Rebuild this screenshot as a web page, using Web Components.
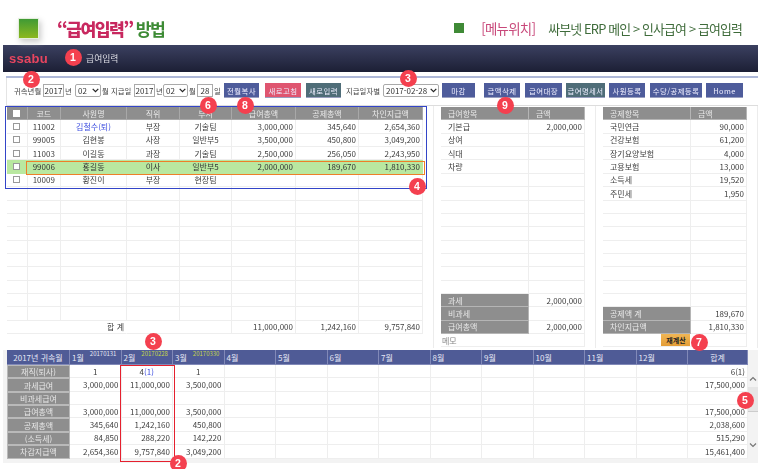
<!DOCTYPE html>
<html lang="ko">
<head>
<meta charset="utf-8">
<title>급여입력 방법</title>
<style>
    html, body { margin: 0; height: 469px; overflow: hidden; background: #fff; }
    body { font-family: "Noto Sans CJK KR", "Noto Sans", sans-serif; }
</style>
</head>
<body>
<guide-page></guide-page>
<script>
const FONT = `"Noto Sans CJK KR", "Noto Sans", sans-serif`;

class GuideHeader extends HTMLElement {
    constructor() {
        super();
        this.attachShadow({ mode: "open" });
        this.shadowRoot.innerHTML = `
            <style>
                :host { display: flex; align-items: center; height: 45px; box-sizing: border-box; padding: 11px 31px 0 18px; white-space: nowrap; font-family: ${FONT}; }
                .logo { width: 21px; height: 21px; background: linear-gradient(#3f9a35, #8cb81f); box-shadow: 2px 3px 6px #ccc; border: 1px solid #e4efdc; box-sizing: border-box; }
                h1 { margin: 0 0 0 18px; font-size: 17.2px; font-weight: 700; letter-spacing: -1.6px; color: #3d8b35; }
                h1 b { color: #c8285f; }
                .mark { width: 10px; height: 10px; background: #3f8a36; margin-left: auto; }
                .where { margin-left: 17px; font-size: 13.4px; letter-spacing: -0.7px; color: #c8487a; }
                .path { margin-left: 13px; font-size: 12.9px; letter-spacing: -0.85px; color: #3e6b3a; }
            </style>
            <div class="logo"></div>
            <h1><b>“급여입력”</b> 방법</h1>
            <div class="mark"></div>
            <span class="where">[메뉴위치]</span>
            <span class="path">싸부넷 ERP 메인 &gt; 인사급여 &gt; 급여입력</span>
        `;
    }
}

class NavBar extends HTMLElement {
    constructor() {
        super();
        this.attachShadow({ mode: "open" });
        this.shadowRoot.innerHTML = `
            <style>
                :host { display: flex; align-items: center; height: 27px; margin: 0 15px 0 3px; background: linear-gradient(#3b4060, #1c1f35); font-family: ${FONT}; }
                .brand { margin-left: 6px; font: 700 13px "Liberation Sans", sans-serif; letter-spacing: 0.3px; color: #e8455f; }
                .title { margin-left: 38px; font-size: 8.8px; color: #dcdce4; }
            </style>
            <span class="brand">ssabu</span>
            <span class="title"><slot></slot></span>
        `;
    }
}

class ToolButton extends HTMLElement {
    constructor() {
        super();
        this.attachShadow({ mode: "open" });
        this.shadowRoot.innerHTML = `
            <style>
                :host { display: flex; flex: none; align-items: center; justify-content: center; height: 14px; box-sizing: border-box; background: var(--btn, #4e5c9b); box-shadow: 0 1px 0 #9aa0c0; color: #eef; font-size: 7.4px; letter-spacing: 0.4px; white-space: nowrap; }
            </style>
            <slot></slot>
        `;
    }
}

class PickBox extends HTMLElement {
    constructor() {
        super();
        this.attachShadow({ mode: "open" });
        this.shadowRoot.innerHTML = `
            <style>
                :host { display: block; position: relative; flex: none; height: 13px; }
                select { display: block; width: 100%; height: 13px; box-sizing: border-box; margin: 0; padding: 0 0 0 2px; border: 1px solid #aaa; border-radius: 2px; background: #fff; color: #333; font: 8px ${FONT}; appearance: none; }
                svg { position: absolute; right: 2px; top: 4px; }
            </style>
            <select><option>${this.getAttribute("value")}</option></select>
            <svg width="7" height="5" viewBox="0 0 7 5"><path d="M.7.8 3.5 3.6 6.3.8" fill="none" stroke="#222" stroke-width="1.2"/></svg>
        `;
    }
}

class PayToolbar extends HTMLElement {
    constructor() {
        super();
        this.attachShadow({ mode: "open" });
        this.shadowRoot.innerHTML = `
            <style>
                :host { display: flex; align-items: center; height: 28px; box-sizing: border-box; margin: 0 15px 0 6px; padding: 0 0 3px 7px; border-left: 1px solid #e4e4e4; border-bottom: 1px solid #ddd; font-family: ${FONT}; font-size: 7.4px; color: #444; white-space: nowrap; }
                input { flex: none; box-sizing: border-box; height: 13px; padding: 0; margin: 0; border: 1px solid #aaa; border-radius: 0; background: #fff; color: #333; font: 8px ${FONT}; text-align: center; }
                span { flex: none; }
            </style>
            <span style="width:26px">귀속년월</span>
            <input value="2017" style="width:21px;margin-left:3px">
            <span style="width:6px;margin-left:1px">년</span>
            <pick-box value="02" style="width:26px;margin-left:4px"></pick-box>
            <span style="width:5px;margin-left:1px">월</span>
            <span style="width:19px;margin-left:4px">지급일</span>
            <input value="2017" style="width:21px;margin-left:4px">
            <span style="width:6px;margin-left:1px">년</span>
            <pick-box value="02" style="width:25px;margin-left:1px"></pick-box>
            <span style="width:6px;margin-left:1px">월</span>
            <input value="28" style="width:16px;margin-left:2px">
            <span style="width:6px;margin-left:1px">일</span>
            <tool-button style="width:35px;margin-left:4px">전월복사</tool-button>
            <tool-button style="width:36px;margin-left:6px;--btn:#df5570">새로고침</tool-button>
            <tool-button style="width:35px;margin-left:5px;--btn:#4f6d78">새로입력</tool-button>
            <span style="width:33px;margin-left:5px">지급일자별</span>
            <pick-box value="2017-02-28" style="width:56px;margin-left:4px"></pick-box>
            <tool-button style="width:33px;margin-left:3px">마감</tool-button>
            <tool-button style="width:36px;margin-left:9px">급액삭제</tool-button>
            <tool-button style="width:37px;margin-left:5px">급여대장</tool-button>
            <tool-button style="width:39px;margin-left:4px;--btn:#4f6d78">급여명세서</tool-button>
            <tool-button style="width:36px;margin-left:4px">사원등록</tool-button>
            <tool-button style="width:52px;margin-left:5px">수당/공제등록</tool-button>
            <tool-button style="width:37px;margin-left:4px">Home</tool-button>
        `;
    }
}

/* generic grid: cols = css column list, rows = array of rows, each cell a string or {t, c, span} */
class PayGrid extends HTMLElement {
    constructor() {
        super();
        this.attachShadow({ mode: "open" });
    }

    set config(cfg) {
        const cells = cfg.rows.map((row) => row.map((cell) => {
            const c = typeof cell === "object" ? cell : { t: cell };
            const span = c.span ? `grid-column: span ${c.span};` : "";
            return `<div class="cell ${c.c || ""}" style="${span}">${c.t}</div>`;
        }).join("")).join("");

        this.shadowRoot.innerHTML = `
            <style>
                :host { display: block; font-family: ${FONT}; font-size: 8px; color: #404040; }
                .grid { display: grid; grid-template-columns: ${cfg.cols}; grid-template-rows: ${cfg.rowSizes || ""}; grid-auto-rows: 13.36px; }
                .cell { display: flex; align-items: center; box-sizing: border-box; min-width: 0; padding: 0 2px; background: #fff; border-right: 1px solid #eee; border-bottom: 1px solid #eee; white-space: nowrap; overflow: hidden; }
                .h { justify-content: center; background: #8e8e8e; color: #e8e8e8; border-color: #a8a8a8; }
                .hl { background: #8e8e8e; color: #e8e8e8; padding-left: 7px; border-color: #b5b5b5; }
                .m { background: #4f5b96; color: #e6e8f5; border-color: #8189b8; }
                .mc { justify-content: center; }
                .lab { justify-content: center; background: #8e8e8e; color: #e6e6e6; border: 1px solid #b9b9b9; }
                .c { justify-content: center; }
                .r { justify-content: flex-end; }
                .l { padding-left: 7px; }
                .sel { background: #b9e8a0; color: #333; border-color: #b9e8a0; }
                .blue { color: #3d4ee0; }
                .memo { color: #888; padding-left: 1px; }
                .none { border-right-color: transparent; }
                sup { position: relative; top: -3px; margin-left: 6px; vertical-align: baseline; font-size: 6px; line-height: 1; white-space: nowrap; }
                sup.y { color: #c8d84a; }
                i { font-style: normal; color: #3d4ee0; }
                .box { display: block; width: 7px; height: 7px; box-sizing: border-box; border: 1px solid #999; background: #fff; }
                .recalc { display: block; margin: 0 -3px 0 auto; width: 30px; height: 13px; background: linear-gradient(#f0b655, #e39b34); color: #222; font-weight: 700; font-size: 7px; line-height: 13px; text-align: center; }
            </style>
            <div class="grid">${cells}</div>
        `;
    }
}

class ScrollBar extends HTMLElement {
    constructor() {
        super();
        this.attachShadow({ mode: "open" });
        this.shadowRoot.innerHTML = `
            <style>
                :host { display: flex; flex-direction: column; align-items: center; box-sizing: border-box; width: 10px; padding-top: 26px; background: #f3f3f3; }
                .thumb { width: 10px; height: 25px; margin: 5px 0 30px; background: #e6e6e6; border-bottom: 1px solid #ccc; box-sizing: border-box; }
                svg { display: block; }
            </style>
            <svg width="8" height="6" viewBox="0 0 8 6"><path d="M1 4.5 4 1.5 7 4.5" fill="none" stroke="#777" stroke-width="1.2"/></svg>
            <div class="thumb"></div>
            <svg width="8" height="6" viewBox="0 0 8 6"><path d="M1 1.5 4 4.5 7 1.5" fill="none" stroke="#777" stroke-width="1.2"/></svg>
        `;
    }
}

class NumBadge extends HTMLElement {
    constructor() {
        super();
        this.attachShadow({ mode: "open" });
        this.shadowRoot.innerHTML = `
            <style>
                :host { position: absolute; display: flex; align-items: center; justify-content: center; width: 17px; height: 17px; margin: -8.5px 0 0 -8.5px; border-radius: 50%; background: #f4404f; color: #fff; font: 700 10.5px "Liberation Sans", sans-serif; }
            </style>
            <slot></slot>
        `;
    }
}

class GuidePage extends HTMLElement {
    constructor() {
        super();
        this.attachShadow({ mode: "open" });
        this.shadowRoot.innerHTML = `
            <style>
                :host { display: block; position: relative; width: 773px; height: 469px; overflow: hidden; font-family: ${FONT}; filter: blur(0.35px); }
                .line { height: 2px; margin: 4px 15px 0 6px; background: #aeb8d8; }
                .main { display: flex; align-items: stretch; height: 242px; margin: 0 15px 0 3px; }
                .pane { box-sizing: border-box; flex: none; padding-top: 1px; border-right: 1px solid #ececec; }
                .emp { width: 431px; padding-left: 4px; }
                .earn { width: 162px; padding-left: 7px; }
                .ded { width: 162px; padding-left: 7px; }
                .emp pay-grid { width: 417px; }
                .earn pay-grid, .ded pay-grid { width: 144px; }
                .year { display: flex; height: 113px; box-sizing: border-box; margin: 2px 15px 0 3px; padding: 0 0 3px 4px; background: #f3f3f3; }
                .year pay-grid { width: 741px; flex: none; }
                .year scroll-bar { flex: none; margin-left: auto; }
                .frame { position: absolute; box-sizing: border-box; pointer-events: none; }
            </style>
            <guide-header></guide-header>
            <nav-bar>급여입력</nav-bar>
            <div class="line"></div>
            <pay-toolbar></pay-toolbar>
            <div class="main">
                <div class="pane emp"><pay-grid id="emp"></pay-grid></div>
                <div class="pane earn"><pay-grid id="earn"></pay-grid></div>
                <div class="pane ded"><pay-grid id="ded"></pay-grid></div>
            </div>
            <div class="year">
                <pay-grid id="months"></pay-grid>
                <scroll-bar></scroll-bar>
            </div>
            <div class="frame" style="left:5px;top:106px;width:422px;height:83px;border:1.6px solid #3345c8"></div>
            <div class="frame" style="left:26px;top:161px;width:399px;height:14px;border:1.6px solid #ee7f28"></div>
            <div class="frame" style="left:120px;top:365px;width:55px;height:97px;border:1.6px solid #e5202e"></div>
            <num-badge style="left:73px;top:57px">1</num-badge>
            <num-badge style="left:31px;top:79px">2</num-badge>
            <num-badge style="left:408px;top:78px">3</num-badge>
            <num-badge style="left:208px;top:105px">6</num-badge>
            <num-badge style="left:245px;top:105px">8</num-badge>
            <num-badge style="left:505px;top:105px">9</num-badge>
            <num-badge style="left:417px;top:186px">4</num-badge>
            <num-badge style="left:153px;top:341px">3</num-badge>
            <num-badge style="left:699px;top:342px">7</num-badge>
            <num-badge style="left:745px;top:400px">5</num-badge>
            <num-badge style="left:178px;top:463px">2</num-badge>
        `;
        this.fill();
    }

    fill() {
        const root = this.shadowRoot;
        const box = `<span class="box"></span>`;
        const head = (t) => ({ t, c: "h" });

        const people = [
            ["11002", { t: "김철수(퇴)", c: "c blue" }, "부장", "기술팀", "3,000,000", "345,640", "2,654,360"],
            ["99005", "김현봉", "사장", "일반부5", "3,500,000", "450,800", "3,049,200"],
            ["11003", "이길동", "과장", "기술팀", "2,500,000", "256,050", "2,243,950"],
            ["99006", "홍길동", "이사", "일반부5", "2,000,000", "189,670", "1,810,330"],
            ["10009", "황진이", "부장", "현장팀", "", "", ""],
        ];
        const empRows = [[
            { t: `<span class="box" style="border-color:#fff"></span>`, c: "h" },
            ...["코드", "사원명", "직위", "부서", "급여총액", "공제총액", "차인지급액"].map(head),
        ]];
        people.forEach((p, i) => {
            const sel = i === 3 ? " sel" : "";
            empRows.push([
                { t: box, c: "c" + sel },
                ...p.map((v, n) => {
                    if (typeof v === "object") return v;
                    return { t: v, c: (n >= 4 ? "r" : "c") + sel };
                }),
            ]);
        });
        for (let i = 0; i < 10; i++) empRows.push(Array(8).fill(""));
        empRows.push([
            { t: "합 계", c: "r none", span: 3 }, { t: "", span: 2 },
            { t: "11,000,000", c: "r" }, { t: "1,242,160", c: "r" }, { t: "9,757,840", c: "r" },
        ]);
        root.getElementById("emp").config = {
            cols: "20.5px 33.5px 66px 53px 52px 64px 63px 64px",
            rows: empRows,
        };

        const sideCols = "88px 56px";
        const earn = [[{ t: "급여항목", c: "hl" }, { t: "금액", c: "hl" }]];
        [["기본급", "2,000,000"], ["상여", ""], ["식대", ""], ["차량", ""]].forEach(([a, b]) => earn.push([{ t: a, c: "l" }, { t: b, c: "r" }]));
        for (let i = 0; i < 9; i++) earn.push(["", ""]);
        earn.push([{ t: "과세", c: "hl" }, { t: "2,000,000", c: "r" }]);
        earn.push([{ t: "비과세", c: "hl" }, { t: "", c: "r" }]);
        earn.push([{ t: "급여총액", c: "hl" }, { t: "2,000,000", c: "r" }]);
        earn.push([{ t: "메모", c: "memo", span: 2 }]);
        root.getElementById("earn").config = { cols: sideCols, rows: earn };

        const ded = [[{ t: "공제항목", c: "hl" }, { t: "금액", c: "hl" }]];
        [["국민연금", "90,000"], ["건강보험", "61,200"], ["장기요양보험", "4,000"], ["고용보험", "13,000"], ["소득세", "19,520"], ["주민세", "1,950"]]
            .forEach(([a, b]) => ded.push([{ t: a, c: "l" }, { t: b, c: "r" }]));
        for (let i = 0; i < 8; i++) ded.push(["", ""]);
        ded.push([{ t: "공제액 계", c: "hl" }, { t: "189,670", c: "r" }]);
        ded.push([{ t: "차인지급액", c: "hl" }, { t: "1,810,330", c: "r" }]);
        ded.push([{ t: `<span class="recalc">재계산</span>`, c: "none" }, ""]);
        root.getElementById("ded").config = { cols: sideCols, rows: ded };

        const monthHead = [{ t: "2017년 귀속월", c: "m mc" }];
        const dates = { 1: `<sup>20170131</sup>`, 2: `<sup class="y">20170228</sup>`, 3: `<sup class="y">20170330</sup>` };
        for (let m = 1; m <= 12; m++) monthHead.push({ t: `${m}월${dates[m] || ""}`, c: "m" });
        monthHead.push({ t: "합계", c: "m mc" });

        const years = [
            ["재직(퇴사)", "1", "4<i>(1)</i>", "1", "6(1)"],
            ["과세급여", "3,000,000", "11,000,000", "3,500,000", "17,500,000"],
            ["비과세급여", "", "", "", ""],
            ["급여총액", "3,000,000", "11,000,000", "3,500,000", "17,500,000"],
            ["공제총액", "345,640", "1,242,160", "450,800", "2,038,600"],
            ["(소득세)", "84,850", "288,220", "142,220", "515,290"],
            ["차감지급액", "2,654,360", "9,757,840", "3,049,200", "15,461,400"],
        ];
        const yearRows = [monthHead];
        years.forEach((y, i) => {
            const align = i === 0 ? "c" : "r";
            yearRows.push([
                { t: y[0], c: "lab" },
                { t: y[1], c: align }, { t: y[2], c: align }, { t: y[3], c: align },
                ...Array(9).fill(""),
                { t: y[4], c: "r" },
            ]);
        });
        root.getElementById("months").config = {
            cols: "63px repeat(12, 51.5px) 60px",
            rowSizes: "15px",
            rows: yearRows,
        };
    }
}

customElements.define("guide-header", GuideHeader);
customElements.define("nav-bar", NavBar);
customElements.define("tool-button", ToolButton);
customElements.define("pick-box", PickBox);
customElements.define("pay-toolbar", PayToolbar);
customElements.define("pay-grid", PayGrid);
customElements.define("scroll-bar", ScrollBar);
customElements.define("num-badge", NumBadge);
customElements.define("guide-page", GuidePage);
</script>
</body>
</html>
